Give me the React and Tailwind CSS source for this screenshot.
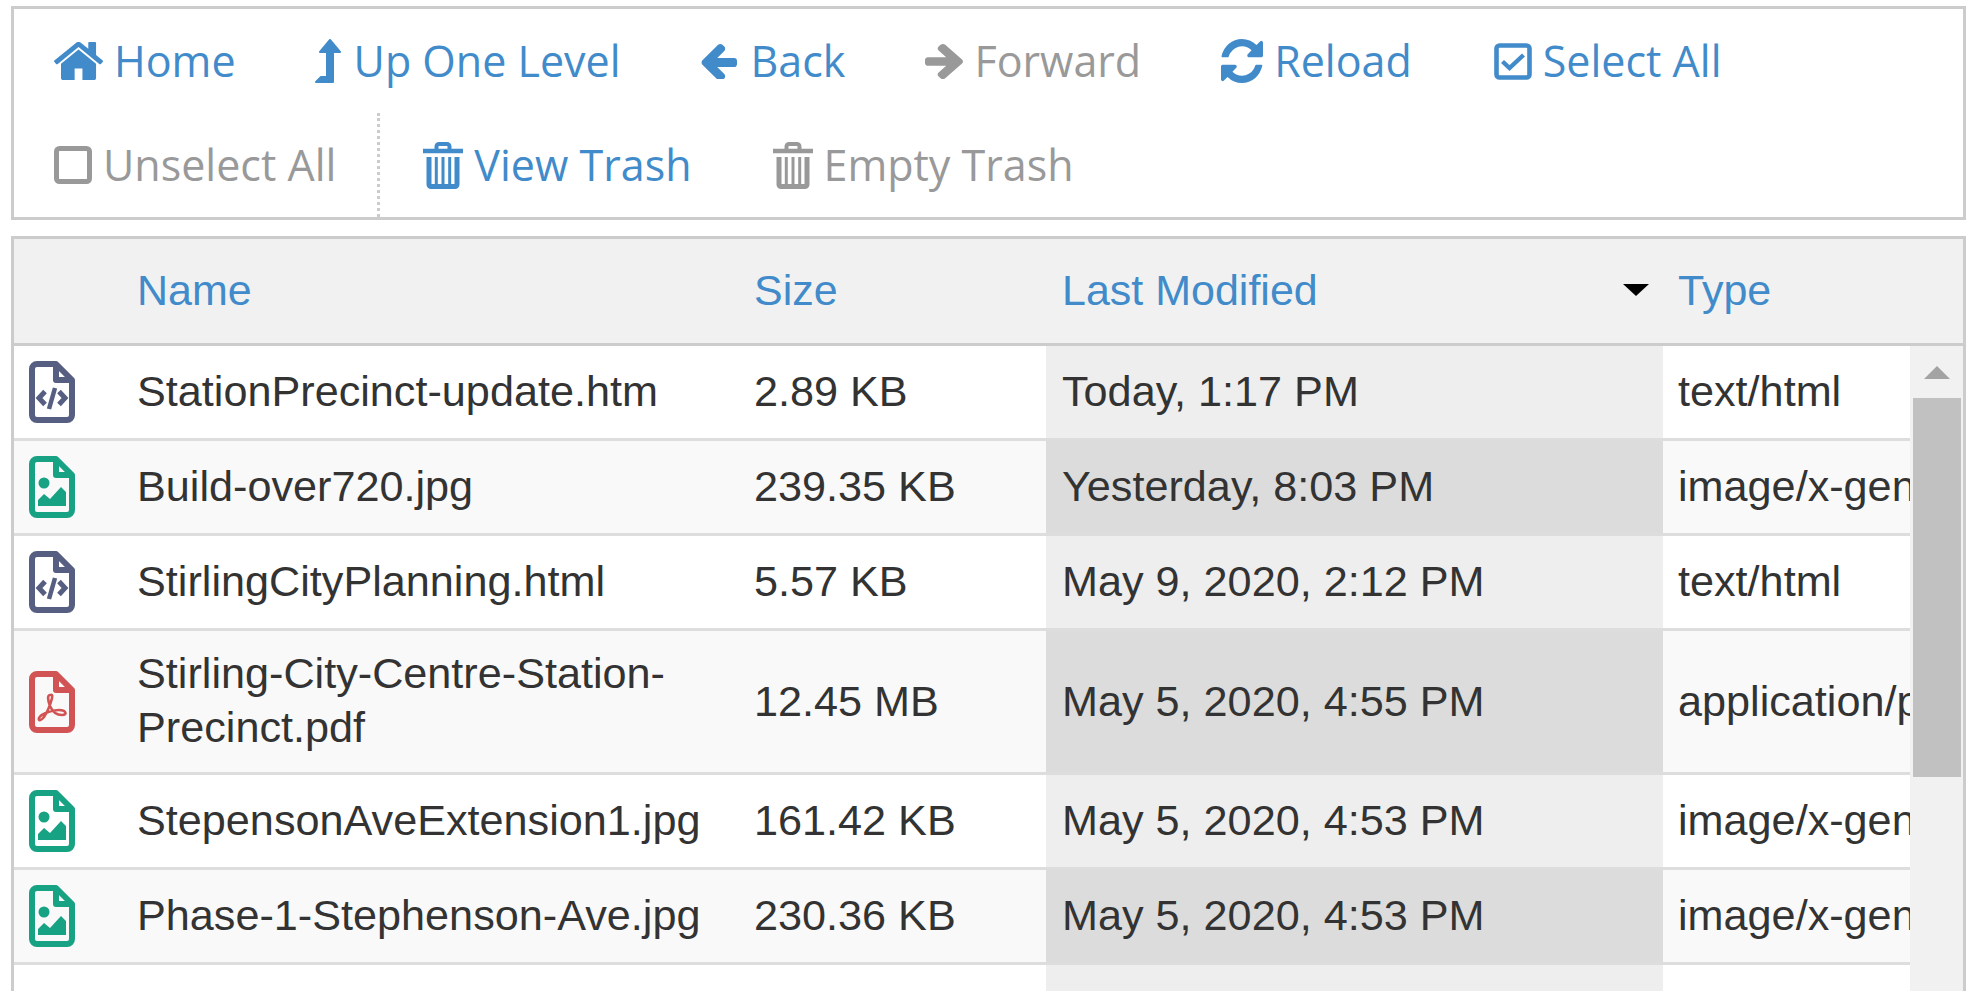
import React from "react";

const P = {
  home: "M1472 992v480q0 26-19 45t-45 19h-384v-384h-256v384h-384q-26 0-45-19t-19-45v-480q0-1 .5-3t.5-3l575-474 575 474q1 2 1 6zm223-69l-62 74q-8 9-21 11h-3q-13 0-21-7l-692-577-692 577q-12 8-24 7-13-2-21-11l-62-74q-8-10-7-23.5t11-21.5l719-599q32-26 76-26t76 26l244 204v-195q0-14 9-23t23-9h192q14 0 23 9t9 23v408l219 182q10 8 11 21.5t-7 23.5z",
  left: "M1664 896v128q0 53-32.5 90.5t-84.5 37.5h-704l293 294q38 36 38 90t-38 90l-75 76q-37 37-90 37-52 0-91-37l-651-652q-37-37-37-90 0-52 37-91l651-650q38-38 91-38 52 0 90 38l75 74q38 38 38 91t-38 91l-293 293h704q52 0 84.5 37.5t32.5 90.5z",
  right: "M1600 960q0 54-37 91l-651 651q-39 37-91 37-51 0-90-37l-75-75q-38-38-38-91t38-91l293-293h-704q-52 0-84.5-37.5t-32.5-90.5v-128q0-53 32.5-90.5t84.5-37.5h704l-293-294q-38-36-38-90t38-90l75-75q38-38 90-38 53 0 91 38l651 651q37 35 37 90z",
  reload: "M1639 1056q0 5-1 7-64 268-268 434.5t-478 166.5q-146 0-282.5-55t-243.5-157l-129 129q-19 19-45 19t-45-19-19-45v-448q0-26 19-45t45-19h448q26 0 45 19t19 45-19 45l-137 137q71 66 161 102t187 36q134 0 250-65t186-179q11-17 53-117 8-23 30-23h192q13 0 22.5 9.5t9.5 22.5zm25-800v448q0 26-19 45t-45 19h-448q-26 0-45-19t-19-45 19-45l138-138q-148-137-349-137-134 0-250 65t-186 179q-11 17-53 117-8 23-30 23h-199q-13 0-22.5-9.5t-9.5-22.5v-7q65-268 270-434.5t480-166.5q146 0 284 55.5t245 156.5l130-129q19-19 45-19t45 19 19 45z",
};

const HomeIcon = () => (
  <svg width="49" height="38" viewBox="90 255 1610 1281" preserveAspectRatio="none" fill="currentColor"><path d={P.home} /></svg>
);
const UpIcon = () => (
  <svg width="26" height="44" viewBox="0 0 26 44" fill="currentColor" stroke="currentColor" strokeWidth="2" strokeLinejoin="round">
    <path d="M15 1 L25 13 H18 V43 H1 L6 38 H12 V13 H5 Z" />
  </svg>
);
const LeftIcon = () => (
  <svg width="37" height="36" viewBox="128 141 1536 1510" preserveAspectRatio="none" fill="currentColor"><path d={P.left} /></svg>
);
const RightIcon = () => (
  <svg width="38" height="36" viewBox="128 141 1472 1598" preserveAspectRatio="none" fill="currentColor"><path d={P.right} /></svg>
);
const ReloadIcon = () => (
  <svg width="42" height="44" viewBox="128 128 1536 1536" preserveAspectRatio="none" fill="currentColor"><path d={P.reload} /></svg>
);
const CheckIcon = () => (
  <svg width="38" height="37" viewBox="0 0 38 37" fill="none" stroke="currentColor">
    <rect x="2.5" y="2.5" width="33" height="32" rx="3" strokeWidth="4.6" />
    <path d="M8.5 18.5 L15.5 25 L29.5 12" strokeWidth="4.4" />
  </svg>
);
const SquareIcon = () => (
  <svg width="38" height="38" viewBox="0 0 38 38" fill="none" stroke="currentColor">
    <rect x="2.5" y="2.5" width="33" height="33" rx="3" strokeWidth="5" />
  </svg>
);
const TrashIcon = () => (
  <svg width="40" height="47" viewBox="0 0 40 47" fill="none" stroke="currentColor">
    <path d="M13.5 8 V4.5 a2.5 2.5 0 0 1 2.5 -2.5 H24 a2.5 2.5 0 0 1 2.5 2.5 V8" strokeWidth="4" />
    <path d="M0 9 H40" strokeWidth="4.5" />
    <path d="M6 15 V42.5 a2 2 0 0 0 2 2 H32 a2 2 0 0 0 2 -2 V15" strokeWidth="5" />
    <path d="M13.3 15 V42 M20 15 V42 M26.7 15 V42" strokeWidth="3" />
  </svg>
);

const Doc = ({ color, children }) => (
  <svg width="46" height="62" viewBox="0 0 46 62" fill="none" style={{ color }}>
    <path d="M8 3 H27 L43 19 V54 a5 5 0 0 1 -5 5 H8 a5 5 0 0 1 -5 -5 V8 a5 5 0 0 1 5 -5 Z" stroke="currentColor" strokeWidth="6" strokeLinejoin="round" />
    <path d="M27 3 V19 H43" stroke="currentColor" strokeWidth="6" strokeLinejoin="round" />
    {children}
  </svg>
);
const CodeFile = () => (
  <Doc color="#565e82">
    <path d="M16 30.5 L10 37 L16 43.5 M30 30.5 L36 37 L30 43.5" stroke="currentColor" strokeWidth="5" />
    <path d="M26 27 L20 48" stroke="currentColor" strokeWidth="4.5" />
  </Doc>
);
const ImageFile = () => (
  <Doc color="#17a283">
    <circle cx="15" cy="27" r="5.5" fill="currentColor" />
    <path d="M9 50 V44 L15 38 L21 43 L32 31 L37 36 V50 Z" fill="currentColor" />
  </Doc>
);
const PdfFile = () => (
  <Doc color="#d15353">
    <path d="M21 24 C18 24 19 30 21 35 C24 42 28 44 33 44 C39 44 37 39 30 39 C22 39 12 43 10 47 C9 50 12 50 15 46 C18 42 22 32 23 27 C24 23 22 24 21 24 Z" stroke="currentColor" strokeWidth="2.6" />
  </Doc>
);

const tools = [
  { label: "Home", Icon: HomeIcon, on: true, cls: "pl-[40px] pr-[41px] gap-[11px]" },
  { label: "Up One Level", Icon: UpIcon, on: true, cls: "pl-[38px] pr-[41px] gap-[13px]" },
  { label: "Back", Icon: LeftIcon, on: true, cls: "pl-[38px] pr-[41px] gap-[14px]" },
  { label: "Forward", Icon: RightIcon, on: false, cls: "pl-[39px] pr-[41px] gap-[11px]" },
  { label: "Reload", Icon: ReloadIcon, on: true, cls: "pl-[39px] pr-[41px] gap-[11px]" },
  { label: "Select All", Icon: CheckIcon, on: true, cls: "pl-[41px] pr-[41px] gap-[11px]" },
  { label: "Unselect All", Icon: SquareIcon, on: false, cls: "pl-[40px] pr-[41px] gap-[11px] border-r-[3px] border-dotted border-[#ccc]" },
  { label: "View Trash", Icon: TrashIcon, on: true, cls: "pl-[43px] pr-[41px] gap-[11px]" },
  { label: "Empty Trash", Icon: TrashIcon, on: false, cls: "pl-[40px] pr-[41px] gap-[11px]" },
];

const rows = [
  { Icon: CodeFile, name: "StationPrecinct-update.htm", size: "2.89 KB", date: "Today, 1:17 PM", type: "text/html" },
  { Icon: ImageFile, name: "Build-over720.jpg", size: "239.35 KB", date: "Yesterday, 8:03 PM", type: "image/x-generic" },
  { Icon: CodeFile, name: "StirlingCityPlanning.html", size: "5.57 KB", date: "May 9, 2020, 2:12 PM", type: "text/html" },
  { Icon: PdfFile, name: "Stirling-City-Centre-Station-Precinct.pdf", size: "12.45 MB", date: "May 5, 2020, 4:55 PM", type: "application/pdf" },
  { Icon: ImageFile, name: "StepensonAveExtension1.jpg", size: "161.42 KB", date: "May 5, 2020, 4:53 PM", type: "image/x-generic" },
  { Icon: ImageFile, name: "Phase-1-Stephenson-Ave.jpg", size: "230.36 KB", date: "May 5, 2020, 4:53 PM", type: "image/x-generic" },
  { blank: true },
];

const cols = "grid grid-cols-[111px_616px_305px_617px_247px]";

export default function App() {
  return (
    <div className="h-[991px] overflow-hidden bg-white pt-[6px] pl-[11px] pr-[12px] flex flex-col gap-[16px] font-['Liberation_Sans',Arial,sans-serif] text-[43.2px] leading-[54px] text-[#333]">
      <div className="shrink-0 border-[3px] border-[#ccc] flex flex-wrap font-['Open_Sans',sans-serif] text-[43px]">
        {tools.map(({ label, Icon, on, cls }) => (
          <div
            key={label}
            className={
              "h-[104px] flex items-center whitespace-nowrap " +
              (on ? "text-[#428bca] " : "text-[#999] ") +
              cls
            }
          >
            <Icon />
            <span>{label}</span>
          </div>
        ))}
      </div>

      <div className="flex-1 min-h-0 border-[3px] border-[#ccc] border-b-0 flex flex-col">
        <div className={cols + " h-[107px] shrink-0 bg-[#f1f1f1] border-b-[3px] border-[#ccc] text-[43px] text-[#428bca] items-center pb-[2px]"}>
          <div />
          <div className="px-[12px]">Name</div>
          <div className="px-[13px]">Size</div>
          <div className="pl-[16px] pr-[14px] flex items-center justify-between">
            <span>Last Modified</span>
            <svg width="26" height="12" viewBox="0 0 26 12" fill="#000"><path d="M0 0 H26 L13 12 Z" /></svg>
          </div>
          <div className="pl-[15px]">Type</div>
        </div>

        <div className="flex-1 min-h-0 flex">
          <div className="w-[1896px] shrink-0 overflow-hidden">
            {rows.map((r, i) => (
              <div
                key={i}
                className={cols + " border-b-[3px] border-[#ddd] " + (i % 2 ? "bg-[#f9f9f9]" : "bg-white")}
              >
                <div className="min-h-[92px] flex items-center pl-[15px]">
                  {r.Icon ? <r.Icon /> : null}
                </div>
                <div className="px-[12px] pt-[15px] pb-[18px] flex items-center">{r.name}</div>
                <div className="px-[13px] pb-[2px] flex items-center">{r.size}</div>
                <div className={"pl-[16px] pb-[2px] flex items-center " + (i % 2 ? "bg-[#dcdcdc]" : "bg-[#eeeeee]")}>{r.date}</div>
                <div className="pl-[15px] pb-[2px] flex items-center overflow-hidden whitespace-nowrap">{r.type}</div>
              </div>
            ))}
          </div>
          <div className="w-[53px] shrink-0 bg-[#f1f1f1] flex flex-col items-center pt-[20px]">
            <svg width="26" height="13" viewBox="0 0 26 13" fill="#a3a3a3" className="shrink-0"><path d="M13 0 L26 13 H0 Z" /></svg>
            <div className="mt-[19px] w-[48px] h-[379px] shrink-0 bg-[#c1c1c1]" />
          </div>
        </div>
      </div>
    </div>
  );
}
